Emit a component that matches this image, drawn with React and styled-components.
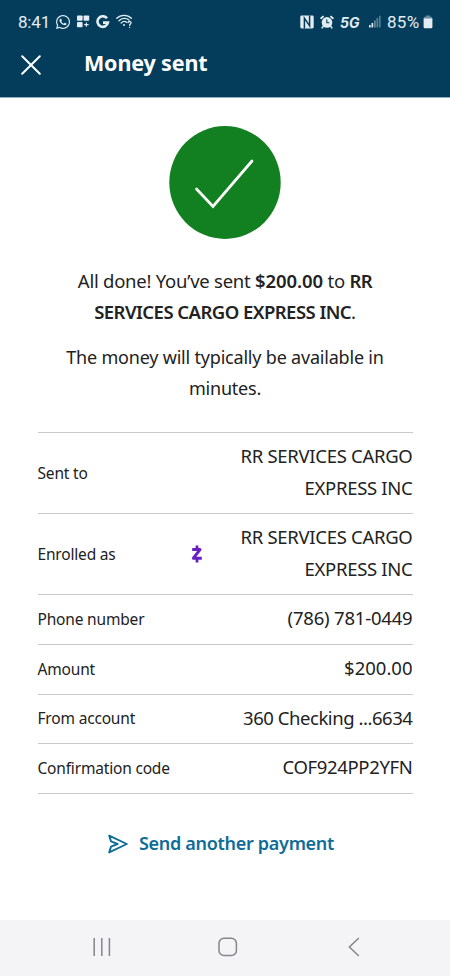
import React from "react";
import styled, { createGlobalStyle } from "styled-components";
import { FaWhatsapp } from "react-icons/fa";

const GlobalStyle = createGlobalStyle`
  * {
    box-sizing: border-box;
  }
  body {
    margin: 0;
    background: #fff;
    font-family: "Noto Sans", "Open Sans", sans-serif;
    color: #222;
  }
`;

const Screen = styled.div`
  width: 450px;
  height: 976px;
  display: flex;
  flex-direction: column;
  overflow: hidden;
`;

const Header = styled.header`
  height: 98px;
  background: #033d5b;
  border-bottom: 1px solid #8fb0c2;
  color: #fff;
`;

const StatusBar = styled.div`
  height: 43px;
  padding: 0 17px 0 18px;
  display: flex;
  align-items: center;
  justify-content: space-between;
  color: #e3edf3;
`;

const StatusGroup = styled.div`
  display: flex;
  align-items: center;
  gap: 6px;

  svg {
    display: block;
    flex: none;
  }
`;

const StatusText = styled.span`
  width: ${(props) => props.$width};
  font-family: Roboto, sans-serif;
  font-size: 17px;
  line-height: 20px;
  letter-spacing: ${(props) => props.$spacing || "0"};
  white-space: nowrap;
`;

const Charge = styled.div`
  display: flex;
  align-items: center;
  gap: 2px;
`;

const Network = styled.span`
  width: 23px;
  font-family: Inter, sans-serif;
  font-size: 14px;
  font-weight: 700;
  font-style: italic;
  line-height: 16px;
  padding-top: 3px;
`;

const TitleBar = styled.div`
  display: flex;
  align-items: center;
  height: 43px;
  padding-left: 21px;
`;

const CloseButton = styled.button`
  padding: 0;
  border: 0;
  background: none;
  color: inherit;
  margin: 0 43px 0 0;
  cursor: pointer;

  svg {
    display: block;
  }
`;

const Title = styled.h1`
  margin: 0;
  padding-bottom: 4px;
  font-size: 21.5px;
  font-weight: 700;
  line-height: 30px;
  letter-spacing: -0.15px;
  white-space: nowrap;
`;

const Content = styled.main`
  flex: 1;
  padding: 28px 37.5px 0;
`;

const Success = styled.div`
  display: flex;
  justify-content: center;
  height: 113px;
`;

const Message = styled.p`
  margin: ${(props) => props.$top} 0 0;
  padding: 0 20px;
  font-size: ${(props) => props.$size};
  line-height: 31.3px;
  text-align: center;
  letter-spacing: ${(props) => props.$spacing};
`;

const Strong = styled.b`
  font-weight: 600;
  letter-spacing: ${(props) => props.$spacing};
`;

const Details = styled.dl`
  margin: 28px 0 0;
  border-top: 1px solid #c9c9c9;
`;

const Row = styled.div`
  display: grid;
  grid-template-columns: 1fr 12px 210px;
  align-items: center;
  height: ${(props) => (props.$tall ? "81px" : "49.7px")};
  border-bottom: 1px solid #c9c9c9;
`;

const Label = styled.dt`
  padding-bottom: 1px;
  font-size: 15.5px;
  line-height: 24px;
  letter-spacing: -0.18px;
  white-space: nowrap;
`;

const Value = styled.dd`
  grid-column: 3;
  margin: 0;
  padding-bottom: 3px;
  font-size: 18.5px;
  line-height: 31.3px;
  text-align: right;
  letter-spacing: ${(props) => props.$spacing || "-0.3px"};
`;

const SendAnother = styled.a`
  display: flex;
  align-items: center;
  justify-content: center;
  gap: 11px;
  margin: 34px 0 0 -8px;
  color: #0f6c99;
  font-size: 18px;
  font-weight: 600;
  line-height: 30px;
  letter-spacing: -0.3px;
  text-decoration: none;
  white-space: nowrap;

  svg {
    margin-top: 3px;
  }
`;

const NavBar = styled.nav`
  display: grid;
  grid-template-columns: repeat(3, 1fr);
  place-items: center;
  height: 56px;
  padding: 0 33px 2px 39px;
  background: #f4f4f7;
`;

const rows = [
  { label: "Sent to", value: "RR SERVICES CARGO EXPRESS INC", tall: true },
  { label: "Enrolled as", value: "RR SERVICES CARGO EXPRESS INC", tall: true, zelle: true },
  { label: "Phone number", value: "(786) 781-0449", spacing: "-0.2px" },
  { label: "Amount", value: "$200.00", spacing: "0" },
  { label: "From account", value: "360 Checking ...6634", spacing: "-0.45px" },
  { label: "Confirmation code", value: "COF924PP2YFN", spacing: "-0.35px" },
];

const AppsIcon = () => (
  <svg width="13" height="13" viewBox="0 0 13 13" fill="currentColor">
    <rect x="0" y="0.5" width="5.6" height="5.3" rx="0.8" />
    <rect x="6.6" y="0.5" width="5.6" height="5.3" rx="0.8" />
    <rect x="0" y="7" width="5.6" height="5.3" rx="0.8" />
    <path d="M9.4 7.4v4.4M7.2 9.6h4.4" stroke="currentColor" strokeWidth="1.1" />
  </svg>
);

const GoogleIcon = () => (
  <svg width="14" height="14" viewBox="0 0 14 14" fill="none" stroke="currentColor" strokeWidth="2.6">
    <path d="M11 3.3A5.3 5.3 0 1 0 12 7.6H7" />
  </svg>
);

const WifiIcon = () => (
  <svg width="17" height="15" viewBox="0 0 17 15" fill="none" stroke="currentColor" strokeWidth="1.3" strokeLinecap="round">
    <path d="M0.8 4.3C4.8 0.4 11.4 0.4 15.4 4.3M3 6.7C6 3.8 10.2 3.8 13 6M5.2 9C7 7.2 9.2 7.2 10.6 8.3" />
    <circle cx="8" cy="11" r="1" fill="currentColor" stroke="none" />
    <path d="M12 8.6C12.2 7 15.2 7.1 15 9C14.9 10 13.6 10.1 13.6 11.4M13.6 13.3v.1" />
  </svg>
);

const NfcIcon = () => (
  <svg width="14" height="14" viewBox="0 0 14 14">
    <rect x="0.3" y="0.5" width="13.4" height="13" rx="1.4" fill="currentColor" />
    <path d="M4.4 13.5V3.2L9.6 10.8V0.5" fill="none" stroke="#033d5b" strokeWidth="1.5" />
  </svg>
);

const AlarmIcon = () => (
  <svg width="14" height="14" viewBox="0 0 14 14" fill="none" stroke="currentColor" strokeLinecap="round">
    <circle cx="7" cy="7.4" r="5.3" fill="currentColor" stroke="none" />
    <path d="M1.2 3.2L3 1.6M12.8 3.2L11 1.6" strokeWidth="1.9" />
    <path d="M3.2 11.4L2.2 12.8M10.8 11.4L11.8 12.8" strokeWidth="1.6" />
    <path d="M6.8 4.8V7.7H9" stroke="#033d5b" strokeWidth="1.1" />
  </svg>
);

const SignalIcon = () => (
  <svg width="12" height="13" viewBox="0 0 12 13" fill="currentColor">
    <rect x="0" y="10" width="1.7" height="2.5" />
    <rect x="2.5" y="8" width="1.7" height="4.5" />
    <rect x="5" y="5.5" width="1.7" height="7" opacity="0.45" />
    <rect x="7.5" y="3" width="1.7" height="9.5" opacity="0.4" />
    <rect x="10" y="0.8" width="1.7" height="11.7" opacity="0.35" />
  </svg>
);

const BatteryIcon = () => (
  <svg width="10" height="14" viewBox="0 0 10 14" fill="currentColor">
    <path d="M3 0.6h4v1.2h1.2a1 1 0 0 1 1 1V4H0.8V2.8a1 1 0 0 1 1-1H3z" opacity="0.45" />
    <path d="M0.6 3.6h8.8v8.4a1.2 1.2 0 0 1-1.2 1.2H1.8A1.2 1.2 0 0 1 0.6 12z" />
  </svg>
);

const ZelleIcon = () => (
  <svg width="12" height="18" viewBox="0 0 12 18" fill="none" stroke="#6a1fc4">
    <path d="M1.2 4.6H9L2.4 13.2H10.8" strokeWidth="3" strokeLinejoin="round" />
    <path d="M6 0.4V4M6 14V17.6" strokeWidth="2.8" />
  </svg>
);

const SendIcon = () => (
  <svg width="20" height="20" viewBox="0 0 20 20" fill="none" stroke="currentColor" strokeWidth="1.9" strokeLinejoin="round" strokeLinecap="round">
    <path d="M1.2 1.6L18.8 10L1.2 18.4L3 12.6L9.6 10L3 7.4Z" />
  </svg>
);

const App = () => {
  return (
    <>
      <GlobalStyle />
      <Screen>
        <Header>
          <StatusBar>
            <StatusGroup>
              <StatusText $width="31px" $spacing="-0.2px">8:41</StatusText>
              <FaWhatsapp size={16} />
              <AppsIcon />
              <GoogleIcon />
              <WifiIcon />
            </StatusGroup>
            <StatusGroup>
              <NfcIcon />
              <AlarmIcon />
              <Network>5G</Network>
              <SignalIcon />
              <Charge>
                <StatusText $width="34px" $spacing="0.3px">85%</StatusText>
                <BatteryIcon />
              </Charge>
            </StatusGroup>
          </StatusBar>
          <TitleBar>
            <CloseButton aria-label="Close">
              <svg width="20" height="20" viewBox="0 0 20 20" fill="none" stroke="currentColor" strokeWidth="2" strokeLinecap="round">
                <path d="M1.2 1.2L18.8 18.8M18.8 1.2L1.2 18.8" />
              </svg>
            </CloseButton>
            <Title>Money sent</Title>
          </TitleBar>
        </Header>

        <Content>
          <Success>
            <svg width="113" height="113" viewBox="0 0 113 113">
              <ellipse cx="56" cy="56.5" rx="55.7" ry="56.4" fill="#128020" />
              <path d="M27.5 63L44 80.5L83 35" fill="none" stroke="#fff" strokeWidth="2.7" strokeLinecap="round" />
            </svg>
          </Success>
          <Message $top="26px" $size="18.5px" $spacing="-0.25px">
            All done! You’ve sent <Strong $spacing="-0.1px">$200.00</Strong> to{" "}
            <Strong $spacing="-0.55px">RR SERVICES CARGO EXPRESS INC</Strong>.
          </Message>
          <Message $top="14px" $size="18px" $spacing="-0.2px">
            The money will typically be available in minutes.
          </Message>
          <Details>
            {rows.map((row) => (
              <Row key={row.label} $tall={row.tall}>
                <Label>{row.label}</Label>
                {row.zelle && <ZelleIcon />}
                <Value $spacing={row.spacing}>{row.value}</Value>
              </Row>
            ))}
          </Details>
          <SendAnother href="#">
            <SendIcon />
            Send another payment
          </SendAnother>
        </Content>

        <NavBar>
          <svg width="18" height="18" viewBox="0 0 18 18" stroke="#85858a" strokeWidth="1.5">
            <path d="M1.2 0v18M8.8 0v18M16.4 0v18" />
          </svg>
          <svg width="20" height="20" viewBox="0 0 20 20" fill="none" stroke="#85858a" strokeWidth="1.5">
            <rect x="1" y="1.2" width="17.4" height="17.2" rx="5" />
          </svg>
          <svg width="12" height="20" viewBox="0 0 12 20" fill="none" stroke="#85858a" strokeWidth="1.5">
            <path d="M10.8 1L1.4 10L10.8 19" />
          </svg>
        </NavBar>
      </Screen>
    </>
  );
};

export default App;
